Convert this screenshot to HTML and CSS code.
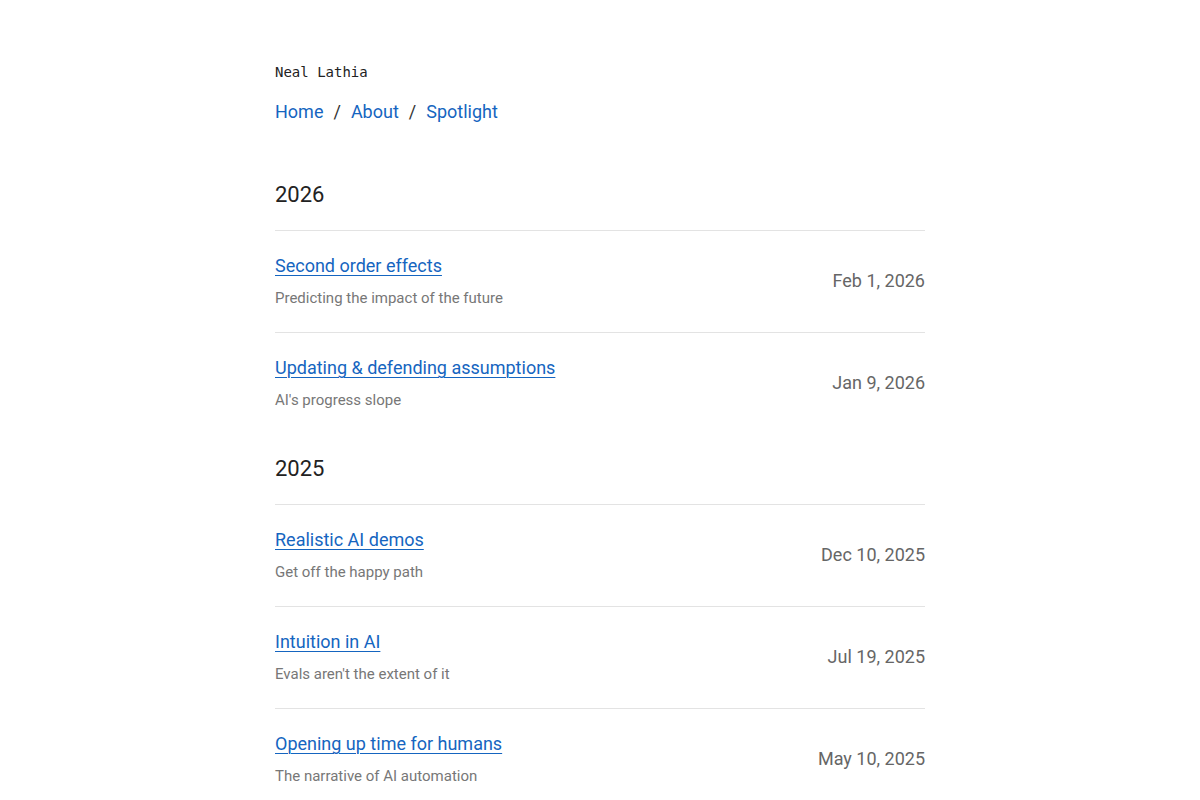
FILE: index.html
```html
<!DOCTYPE html>
<html lang="en">
<head>
<meta charset="utf-8">
<title>Neal Lathia</title>
<link rel="stylesheet" href="styles.css">
</head>
<body>
<main class="page">
  <header class="header">
    <div class="name">Neal Lathia</div>
    <nav class="nav">
      <a href="#">Home</a><span class="sep">/</span><a href="#">About</a><span class="sep">/</span><a href="#">Spotlight</a>
    </nav>
  </header>

  <section class="year">
    <h2 class="year-title">2026</h2>
    <ul class="posts">
      <li class="post">
        <div class="post-main">
          <a class="post-title" href="#">Second order effects</a>
          <div class="post-sub">Predicting the impact of the future</div>
        </div>
        <div class="post-date">Feb 1, 2026</div>
      </li>
      <li class="post">
        <div class="post-main">
          <a class="post-title" href="#">Updating &amp; defending assumptions</a>
          <div class="post-sub">AI's progress slope</div>
        </div>
        <div class="post-date">Jan 9, 2026</div>
      </li>
    </ul>
  </section>

  <section class="year">
    <h2 class="year-title">2025</h2>
    <ul class="posts">
      <li class="post">
        <div class="post-main">
          <a class="post-title" href="#">Realistic AI demos</a>
          <div class="post-sub">Get off the happy path</div>
        </div>
        <div class="post-date">Dec 10, 2025</div>
      </li>
      <li class="post">
        <div class="post-main">
          <a class="post-title" href="#">Intuition in AI</a>
          <div class="post-sub">Evals aren't the extent of it</div>
        </div>
        <div class="post-date">Jul 19, 2025</div>
      </li>
      <li class="post">
        <div class="post-main">
          <a class="post-title" href="#">Opening up time for humans</a>
          <div class="post-sub">The narrative of AI automation</div>
        </div>
        <div class="post-date">May 10, 2025</div>
      </li>
    </ul>
  </section>
</main>
</body>
</html>
```
FILE: styles.css
```css
html, body {
  margin: 0;
  padding: 0;
  background: #ffffff;
}
body {
  font-family: Roboto, "Noto Sans", sans-serif;
  color: #222222;
}
.page {
  width: 650px;
  margin: 0 auto;
  padding-top: 62px;
}
.header {
  display: flex;
  flex-direction: column;
  gap: 18px;
}
.name {
  font-family: "DejaVu Sans Mono", "Liberation Mono", monospace;
  font-size: 14px;
  line-height: 20px;
  color: #222222;
}
.nav {
  font-size: 18px;
  line-height: 24px;
  display: flex;
  align-items: center;
}
.nav a {
  color: #1565c0;
  text-decoration: none;
}
.sep {
  color: #333333;
  margin: 0 10px;
}
.year {
  margin-top: 56px;
}
.year + .year {
  margin-top: 20px;
}
.year-title {
  margin: 0;
  font-size: 22px;
  font-weight: 400;
  line-height: 30px;
  padding-bottom: 20px;
  border-bottom: 1px solid #e3e3e3;
  color: #222222;
}
.posts {
  list-style: none;
  margin: 0;
  padding: 0;
}
.post {
  display: flex;
  align-items: center;
  justify-content: space-between;
  padding: 23px 0 24px;
  border-bottom: 1px solid #e3e3e3;
}
.post:last-child {
  border-bottom: none;
}
.post-main {
  display: flex;
  flex-direction: column;
  gap: 10px;
}
.post-title {
  font-size: 18px;
  line-height: 24px;
  color: #1565c0;
  text-decoration: underline;
  text-underline-offset: 3px;
  text-decoration-thickness: 1px;
}
.post-sub {
  font-size: 15px;
  line-height: 20px;
  color: #777777;
}
.post-date {
  font-size: 18px;
  line-height: 24px;
  color: #666666;
}
```
